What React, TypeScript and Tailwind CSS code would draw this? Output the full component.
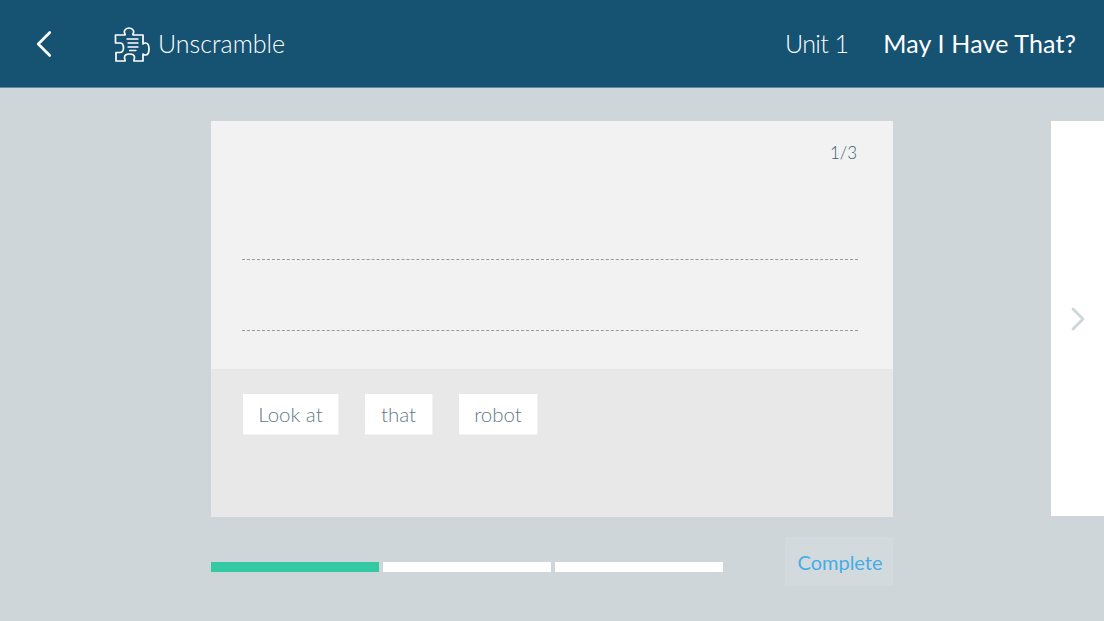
import { ChevronLeft, ChevronRight } from 'lucide-react';

const words = [
  { label: 'Look at', width: 'w-[96px]' },
  { label: 'that', width: 'w-[68px]' },
  { label: 'robot', width: 'w-[79px]' },
];

function PuzzleIcon() {
  return (
    <svg width="36" height="36" viewBox="0 0 36 36" fill="none" stroke="white" strokeWidth="1.7" strokeLinejoin="round" strokeLinecap="round">
      <path d="M1.5 9H11C11.5 8.5 11.2 8 10.7 7.2C9.8 5.8 10.5 2 15 2C19.5 2 20.2 5.8 19.3 7.2C18.8 8 18.5 8.5 19 9H29V18C29.5 17.5 30.5 17 31.5 17C33.5 17 35 19 35 23C35 27 33.5 29 31.5 29C30.5 29 29.5 28.5 29 28V35H20C19.5 34 20.5 33 20.5 31.5C20.5 29 18 28 15.5 28C13 28 10.5 29 10.5 31.5C10.5 33 11.5 34 11 35H2V26.5H6C8 26.5 9.5 24.5 9.5 21.8C9.5 19 8 17 6 17H1.5Z" />
      <path d="M13 13H24M14 17H24M14 21H24M15.5 24.5H22" strokeWidth="1.3" />
    </svg>
  );
}

function Chip({ label, width }: { label: string; width: string }) {
  return (
    <div className={`${width} h-[41px] flex items-center justify-center bg-white text-[20.5px] font-light text-[#627a88] border-r border-b border-[#f1f1f1]`}>
      {label}
    </div>
  );
}

export default function App() {
  return (
    <div className="h-[621px] w-[1104px] overflow-hidden bg-[#ced6d9] font-['Lato',sans-serif]">
      {/* Header */}
      <header className="h-[88px] flex items-center bg-[#165272] border-b border-[#5f8ba3] text-white">
        <div className="w-[114px] pl-[21px]">
          <ChevronLeft size={46} strokeWidth={1.4} />
        </div>
        <PuzzleIcon />
        <span className="ml-2 text-[25px] font-light">Unscramble</span>
        <span className="ml-auto text-[25px] font-light tracking-[-0.6px]">Unit 1</span>
        <span className="ml-[35px] mr-[28px] text-[25px] tracking-[0.15px]">May I Have That?</span>
      </header>

      <main className="pt-[33px] pl-[211px]">
        <div className="flex">
          {/* Question card */}
          <section className="w-[682px] h-[396px] shrink-0 flex flex-col">
            <div className="h-[248px] px-[31px] bg-[#f2f2f2]">
              <p className="pt-[21px] text-right text-[17px] leading-[22px] font-light text-[#3f5f73] mr-[5px]">1/3</p>
              <div className="mt-[95px] h-px border-t border-dashed border-[#9a9a9a] mr-[4px]" />
              <div className="mt-[70px] h-px border-t border-dashed border-[#9a9a9a] mr-[4px]" />
            </div>
            <div className="flex-1 flex items-start gap-[26px] pt-[25px] pl-[32px] bg-[#e8e8e8]">
              {words.map(word => (
                <Chip key={word.label} label={word.label} width={word.width} />
              ))}
            </div>
          </section>

          {/* Next card peek */}
          <aside className="ml-[158px] w-[53px] h-[395px] flex items-center justify-center bg-white text-[#ced6d9]">
            <ChevronRight size={40} strokeWidth={1.7} />
          </aside>
        </div>

        {/* Progress and submit */}
        <div className="w-[682px] mt-[20px] flex items-start">
          <div className="flex gap-1 mt-[25px]">
            <div className="w-[168px] h-[10px] bg-[#33c9a3]" />
            <div className="w-[168px] h-[10px] bg-white" />
            <div className="w-[168px] h-[10px] bg-white" />
          </div>
          <button className="ml-auto w-[108px] h-[49px] pl-[2px] bg-[#d2dadd] text-[20px] text-[#45ade8] font-normal">
            Complete
          </button>
        </div>
      </main>
    </div>
  );
}
